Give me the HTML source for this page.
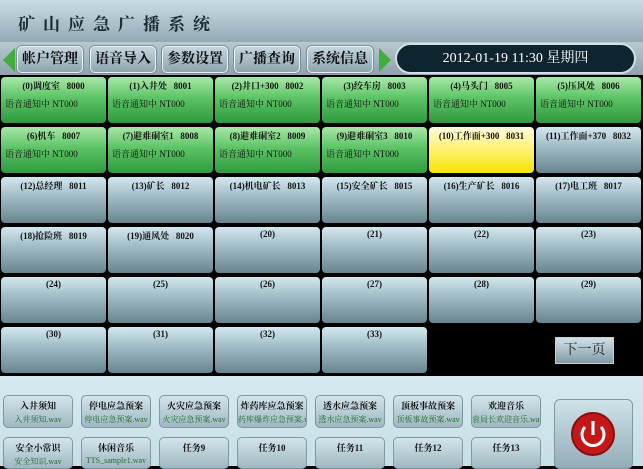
<!DOCTYPE html><html><head><meta charset="utf-8"><style>
*{margin:0;padding:0;box-sizing:border-box}
body{width:643px;height:466px;overflow:hidden;position:relative;background:#000;font-family:"Liberation Serif","Noto Serif CJK SC",serif}
.abs{position:absolute}
#title{left:0;top:0;width:643px;height:42px;background:linear-gradient(#c9dde6,#a9bec8 60%,#93a9b4)}
#title span{position:absolute;left:18px;top:10px;font-size:17px;font-weight:bold;letter-spacing:8px;color:#1a2a33}
#nav{left:0;top:42px;width:643px;height:33px;background:linear-gradient(#b8c8cf,#8ea3ad)}
.nb{position:absolute;top:46px;height:27px;width:66px;border:1px solid #e8f2f6;border-radius:5px;background:linear-gradient(#c5d6de,#8da4ae);font-size:14px;font-weight:bold;color:#111;text-align:center;line-height:25px;box-shadow:0 0 0 1px #7890a0}
.arr{position:absolute;width:0;height:0;border-top:12px solid transparent;border-bottom:12px solid transparent}
#date{left:395px;top:43px;width:241px;height:31px;border-radius:16px;background:#0e2530;border:2px solid #cfe0e6;color:#fff;font-size:14px;text-align:center;line-height:27px}
.c{position:absolute;width:105px;height:46px;border-radius:4px;background:linear-gradient(#d3e8ef,#a3bec8 40%,#68858f);font-size:9px;font-weight:bold;color:#111;text-align:center;padding-top:2px}
.g{background:linear-gradient(#a8e8a8,#5cc465 45%,#2f9a3f)}
.y{background:linear-gradient(#fffbe0,#fff27a 45%,#f6e400)}
.c i{display:block;font-style:normal;font-weight:normal;text-align:left;padding-left:4px;margin-top:5px;font-size:9px}
#bot{left:0;top:376px;width:643px;height:90px;background:linear-gradient(#d6eaf0,#c6dfe7)}
.b{position:absolute;width:70px;height:33px;border-radius:5px;background:linear-gradient(#d2e4ea,#9fb8c2);border:1px solid #7f98a2;font-size:9px;font-weight:bold;text-align:center;padding-top:3px;color:#111}
.b i{display:block;font-style:normal;font-weight:normal;color:#1d6e2a;font-size:8px;margin-top:2px;white-space:nowrap;overflow:hidden}
</style></head><body>
<div id="title" class="abs"><span>矿山应急广播系统</span></div>
<div id="nav" class="abs"></div>
<div class="arr" style="left:3px;top:48px;border-right:12px solid #3fae3a"></div>
<div class="arr" style="left:379px;top:48px;border-left:12px solid #3fae3a"></div>
<div class="nb" style="left:17px">帐户管理</div>
<div class="nb" style="left:90px">语音导入</div>
<div class="nb" style="left:162px">参数设置</div>
<div class="nb" style="left:234px">广播查询</div>
<div class="nb" style="left:307px">系统信息</div>
<div id="date" class="abs">2012-01-19 11:30 星期四</div>

<div class="c g" style="left:1px;top:77px">(0)调度室 &nbsp; 8000<i>语音通知中 NT000</i></div>
<div class="c g" style="left:108px;top:77px">(1)入井处 &nbsp; 8001<i>语音通知中 NT000</i></div>
<div class="c g" style="left:215px;top:77px">(2)井口+300 &nbsp; 8002<i>语音通知中 NT000</i></div>
<div class="c g" style="left:322px;top:77px">(3)绞车房 &nbsp; 8003<i>语音通知中 NT000</i></div>
<div class="c g" style="left:429px;top:77px">(4)马头门 &nbsp; 8005<i>语音通知中 NT000</i></div>
<div class="c g" style="left:536px;top:77px">(5)压风处 &nbsp; 8006<i>语音通知中 NT000</i></div>
<div class="c g" style="left:1px;top:127px">(6)机车 &nbsp; 8007<i>语音通知中 NT000</i></div>
<div class="c g" style="left:108px;top:127px">(7)避难硐室1 &nbsp; 8008<i>语音通知中 NT000</i></div>
<div class="c g" style="left:215px;top:127px">(8)避难硐室2 &nbsp; 8009<i>语音通知中 NT000</i></div>
<div class="c g" style="left:322px;top:127px">(9)避难硐室3 &nbsp; 8010<i>语音通知中 NT000</i></div>
<div class="c y" style="left:429px;top:127px">(10)工作面+300 &nbsp; 8031</div>
<div class="c" style="left:536px;top:127px">(11)工作面+370 &nbsp; 8032</div>
<div class="c" style="left:1px;top:177px">(12)总经理 &nbsp; 8011</div>
<div class="c" style="left:108px;top:177px">(13)矿长 &nbsp; 8012</div>
<div class="c" style="left:215px;top:177px">(14)机电矿长 &nbsp; 8013</div>
<div class="c" style="left:322px;top:177px">(15)安全矿长 &nbsp; 8015</div>
<div class="c" style="left:429px;top:177px">(16)生产矿长 &nbsp; 8016</div>
<div class="c" style="left:536px;top:177px">(17)电工班 &nbsp; 8017</div>
<div class="c" style="left:1px;top:227px">(18)抢险班 &nbsp; 8019</div>
<div class="c" style="left:108px;top:227px">(19)通风处 &nbsp; 8020</div>
<div class="c" style="left:215px;top:227px">(20)</div>
<div class="c" style="left:322px;top:227px">(21)</div>
<div class="c" style="left:429px;top:227px">(22)</div>
<div class="c" style="left:536px;top:227px">(23)</div>
<div class="c" style="left:1px;top:277px">(24)</div>
<div class="c" style="left:108px;top:277px">(25)</div>
<div class="c" style="left:215px;top:277px">(26)</div>
<div class="c" style="left:322px;top:277px">(27)</div>
<div class="c" style="left:429px;top:277px">(28)</div>
<div class="c" style="left:536px;top:277px">(29)</div>
<div class="c" style="left:1px;top:327px">(30)</div>
<div class="c" style="left:108px;top:327px">(31)</div>
<div class="c" style="left:215px;top:327px">(32)</div>
<div class="c" style="left:322px;top:327px">(33)</div>
<div class="abs" style="left:555px;top:337px;width:59px;height:27px;border:1px solid #ccc;background:linear-gradient(#cfe1e8,#7f9aa6);font-size:14px;text-align:center;line-height:25px;color:#222">下一页</div>

<div id="bot" class="abs"></div>
<div class="b" style="left:3px;top:395px">入井须知<i>入井须知.wav</i></div>
<div class="b" style="left:81px;top:395px">停电应急预案<i>停电应急预案.wav</i></div>
<div class="b" style="left:159px;top:395px">火灾应急预案<i>火灾应急预案.wav</i></div>
<div class="b" style="left:237px;top:395px">炸药库应急预案<i>药库爆炸应急预案.wav</i></div>
<div class="b" style="left:315px;top:395px">透水应急预案<i>透水应急预案.wav</i></div>
<div class="b" style="left:393px;top:395px">顶板事故预案<i>顶板事故预案.wav</i></div>
<div class="b" style="left:471px;top:395px">欢迎音乐<i>袁局长欢迎音乐.wav</i></div>
<div class="b" style="left:3px;top:437px;height:32px">安全小常识<i>安全知识.wav</i></div>
<div class="b" style="left:81px;top:437px;height:32px">休闲音乐<i>TTS_sample1.wav</i></div>
<div class="b" style="left:159px;top:437px;height:32px">任务9</div>
<div class="b" style="left:237px;top:437px;height:32px">任务10</div>
<div class="b" style="left:315px;top:437px;height:32px">任务11</div>
<div class="b" style="left:393px;top:437px;height:32px">任务12</div>
<div class="b" style="left:471px;top:437px;height:32px">任务13</div>
<div class="abs" style="left:554px;top:399px;width:79px;height:70px;border-radius:6px;border:1px solid #7f98a2;background:linear-gradient(#cfe2e9,#93adb8)">
<svg width="79" height="70" style="position:absolute;left:-1px;top:-1px"><circle cx="39" cy="35" r="21" fill="#c41818" stroke="#8a0c0c" stroke-width="2"/><path d="M31 28 A11 11 0 1 0 47 28" fill="none" stroke="#fff" stroke-width="3"/><line x1="39" y1="22" x2="39" y2="36" stroke="#fff" stroke-width="3"/></svg></div>
</body></html>
